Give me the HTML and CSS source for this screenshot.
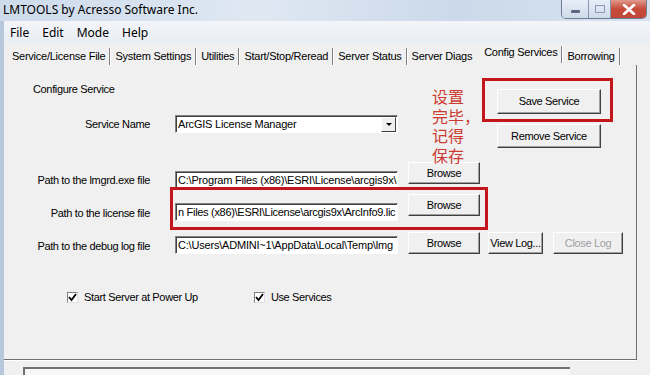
FILE: index.html
```html
<!DOCTYPE html>
<html lang="en">
<head>
    <meta charset="UTF-8">
    <title>LMTOOLS</title>
    <link rel="stylesheet" href="styles.css">
</head>
<body>
    <div class="window">
        <div class="titlebar">
            <span class="title">LMTOOLS by Acresso Software Inc.</span>
            <div class="caption-buttons">
                <span class="cap-btn cap-min"><span class="min-bar"></span></span>
                <span class="cap-btn cap-max"><span class="max-box"></span></span>
                <span class="cap-btn cap-close">
                    <svg width="14" height="11" viewBox="0 0 14 11"><path d="M2 1 L12 10 M12 1 L2 10" stroke="#fff" stroke-width="2.6" stroke-linecap="round"/></svg>
                </span>
            </div>
        </div>
        <div class="frame">
            <div class="menubar">
                <span>File</span>
                <span>Edit</span>
                <span>Mode</span>
                <span>Help</span>
            </div>
            <div class="tabs">
                <span class="tab">Service/License File</span>
                <span class="tab">System Settings</span>
                <span class="tab">Utilities</span>
                <span class="tab">Start/Stop/Reread</span>
                <span class="tab">Server Status</span>
                <span class="tab no-sep">Server Diags</span>
                <span class="tab active">Config Services</span>
                <span class="tab">Borrowing</span>
            </div>

            <div class="panel">
                <div class="service-top">
                    <div class="service-left">
                        <div class="heading">Configure Service</div>
                        <div class="form-row">
                            <label class="label">Service Name</label>
                            <div class="combo">
                                <span class="field-text">ArcGIS License Manager</span>
                                <span class="combo-btn"><span class="arrow"></span></span>
                            </div>
                        </div>
                    </div>
                    <div class="service-actions">
                        <button class="btn btn-wide">Save Service</button>
                        <button class="btn btn-wide">Remove Service</button>
                    </div>
                </div>

                <div class="path-row">
                    <label class="label">Path to the lmgrd.exe file</label>
                    <div class="field"><span class="field-text">C:\Program Files (x86)\ESRI\License\arcgis9x\l</span></div>
                    <button class="btn btn-browse">Browse</button>
                </div>
                <div class="path-row">
                    <label class="label">Path to the license file</label>
                    <div class="field"><span class="field-text tight">n Files (x86)\ESRI\License\arcgis9x\ArcInfo9.lic</span></div>
                    <button class="btn btn-browse">Browse</button>
                </div>
                <div class="path-row debug">
                    <label class="label">Path to the debug log file</label>
                    <div class="field"><span class="field-text">C:\Users\ADMINI~1\AppData\Local\Temp\lmg</span></div>
                    <button class="btn btn-browse">Browse</button>
                    <button class="btn btn-log">View Log...</button>
                    <button class="btn btn-close-log" disabled>Close Log</button>
                </div>

                <div class="checks">
                    <label class="check">
                        <span class="box"><svg width="9" height="9" viewBox="0 0 9 9"><path d="M1 4 L3.5 7 L8 1" fill="none" stroke="#000" stroke-width="1.8"/></svg></span>
                        Start Server at Power Up
                    </label>
                    <label class="check">
                        <span class="box"><svg width="9" height="9" viewBox="0 0 9 9"><path d="M1 4 L3.5 7 L8 1" fill="none" stroke="#000" stroke-width="1.8"/></svg></span>
                        Use Services
                    </label>
                </div>

                <!-- annotations drawn over the screenshot -->
                <div class="note">
                    <div>设置</div>
                    <div>完毕，</div>
                    <div>记得</div>
                    <div>保存</div>
                </div>
                <div class="mark mark-save"></div>
                <div class="mark mark-license"></div>
            </div>

            <div class="statusbar">
                <div class="status-box"></div>
            </div>
        </div>
    </div>
</body>
</html>
```

FILE: styles.css
```css
body {
    margin: 0;
    padding: 0;
    background-color: #f0f0f0;
}
.window {
    width: 650px;
    height: 375px;
    overflow: hidden;
    font-family: "Liberation Sans", Arial, sans-serif;
    font-size: 11px;
    letter-spacing: -0.35px;
    color: #000;
    background-color: #f0f0f0;
}
.titlebar {
    height: 21px;
    display: flex;
    align-items: flex-start;
    justify-content: space-between;
    background: linear-gradient(to right, #cddbeb 0%, #dfe8f3 40%, #cbd9ea 70%, #d8e3ef 100%);
}
.title {
    font-family: "Noto Sans", sans-serif;
    font-size: 12px;
    letter-spacing: 0;
    line-height: 20px;
    padding-left: 3px;
}
.caption-buttons {
    display: flex;
    margin-right: 3px;
    height: 18px;
    border: 1px solid #6d7c93;
    border-top: none;
    border-radius: 0 0 5px 5px;
    overflow: hidden;
}
.cap-btn {
    display: flex;
    align-items: center;
    justify-content: center;
    height: 18px;
}
.cap-min, .cap-max {
    background: linear-gradient(to bottom, #e7eef7, #cfdbea);
    border-right: 1px solid #8797ad;
}
.cap-min {
    width: 26px;
}
.cap-max {
    width: 21px;
}
.min-bar {
    width: 9px;
    height: 3px;
    margin-top: 5px;
    background-color: #5b6a80;
    border-radius: 1px;
}
.max-box {
    width: 8px;
    height: 6px;
    border: 1px solid #8a9ab0;
}
.cap-close {
    width: 35px;
    background: linear-gradient(to bottom, #e09a8c, #c74a38 50%, #c0483a);
}
.frame {
    border-left: 4px solid #b8c8dc;
}
.menubar {
    height: 22px;
    display: flex;
    align-items: center;
    gap: 13px;
    padding-left: 6px;
    font-family: "Noto Sans", sans-serif;
    font-size: 12px;
    letter-spacing: 0;
    background: linear-gradient(to bottom, #f3f5f9, #e9edf4);
}
.tabs {
    height: 22px;
    display: flex;
    align-items: flex-end;
    padding-left: 5px;
    background-color: #f0f0f0;
}
.tab {
    height: 17px;
    line-height: 17px;
    padding: 0 4px 0 3px;
    margin-right: 2px;
    letter-spacing: -0.25px;
    border-right: 1px solid #808080;
    box-shadow: 1px 0 0 #fff;
}
.tab.no-sep {
    border-right-color: transparent;
    box-shadow: none;
}
.tab.active {
    line-height: 13px;
    padding-left: 5px;
    margin-bottom: 2px;
}
.panel {
    position: relative;
    height: 294px;
    width: 632px;
    border-right: 1px solid #6f6f6f;
    border-bottom: 1px solid #6f6f6f;
    box-shadow: 0 1px 0 #fff;
    background-color: #f0f0f0;
}
.service-top {
    display: flex;
    height: 83px;
}
.service-left {
    width: 394px;
}
.heading {
    padding: 17px 0 0 29px;
    line-height: 14px;
}
.form-row {
    display: flex;
    margin-top: 19px;
}
.label {
    width: 146px;
    text-align: right;
    line-height: 18px;
    white-space: nowrap;
}
.combo, .field {
    width: 221px;
    height: 16px;
    margin-left: 25px;
    display: flex;
    align-items: center;
    background-color: #fff;
    border: 1px solid;
    border-color: #828282 #fff #fff #828282;
    box-shadow: inset 1px 1px 0 #404040;
    overflow: hidden;
}
.field-text {
    padding-left: 2px;
    white-space: nowrap;
    line-height: 16px;
    letter-spacing: -0.2px;
}
.field-text.tight {
    letter-spacing: -0.3px;
}
.combo {
    justify-content: space-between;
}
.combo-btn {
    width: 13px;
    height: 13px;
    margin-right: 1px;
    display: flex;
    align-items: center;
    justify-content: center;
    background-color: #f0f0f0;
    border: 1px solid;
    border-color: #fff #404040 #404040 #fff;
}
.arrow {
    width: 0;
    height: 0;
    border-left: 3px solid transparent;
    border-right: 3px solid transparent;
    border-top: 3px solid #000;
}
.service-actions {
    display: flex;
    flex-direction: column;
    gap: 10px;
    margin: 24px 0 0 99px;
}
.btn {
    font-family: "Liberation Sans", Arial, sans-serif;
    font-size: 11px;
    letter-spacing: -0.35px;
    color: #000;
    background-color: #f0f0f0;
    border: 1px solid;
    border-color: #fff #404040 #404040 #fff;
    box-shadow: inset -1px -1px 0 #a0a0a0;
    padding: 0;
    height: 23px;
}
.btn-wide {
    width: 104px;
    height: 25px;
}
.btn-browse {
    width: 72px;
    height: 22px;
    margin-left: 10px;
}
.btn-log {
    width: 55px;
    height: 22px;
    margin-left: 8px;
}
.btn-close-log {
    width: 70px;
    height: 22px;
    margin-left: 10px;
    color: #a0a0a0;
}
.path-row {
    display: flex;
    align-items: flex-start;
    height: 32px;
}
.service-top + .path-row {
    margin-top: 14px;
}
.path-row .label, .path-row .field {
    margin-top: 9px;
}
.path-row.debug {
    margin-top: 6px;
}
.path-row.debug .label, .path-row.debug .field {
    margin-top: 4px;
}
.path-row + .path-row .label {
    padding-top: 1px;
}
.checks {
    display: flex;
    margin-top: 26px;
    padding-left: 63px;
    gap: 56px;
}
.check {
    display: flex;
    align-items: center;
    gap: 6px;
    line-height: 14px;
}
.box {
    width: 9px;
    height: 9px;
    display: flex;
    align-items: center;
    justify-content: center;
    background-color: #fff;
    border: 1px solid;
    border-color: #808080 #e0e0e0 #e0e0e0 #808080;
}
.note {
    position: absolute;
    left: 428px;
    top: 22px;
    font-family: "Noto Sans CJK SC", sans-serif;
    font-size: 16px;
    line-height: 19.5px;
    letter-spacing: 0;
    color: #cc3a30;
}
.note div {
    height: 19.5px;
}
.mark {
    position: absolute;
    border: 3px solid #c4141c;
}
.mark-save {
    left: 478px;
    top: 13px;
    width: 125px;
    height: 38px;
}
.mark-license {
    left: 166px;
    top: 122px;
    width: 312px;
    height: 37px;
}
.statusbar {
    height: 15px;
    padding: 7px 0 0 19px;
}
.status-box {
    width: 545px;
    height: 10px;
    border-top: 2px solid #707070;
    border-left: 2px solid #707070;
    background-color: #f7f7f7;
}
```
